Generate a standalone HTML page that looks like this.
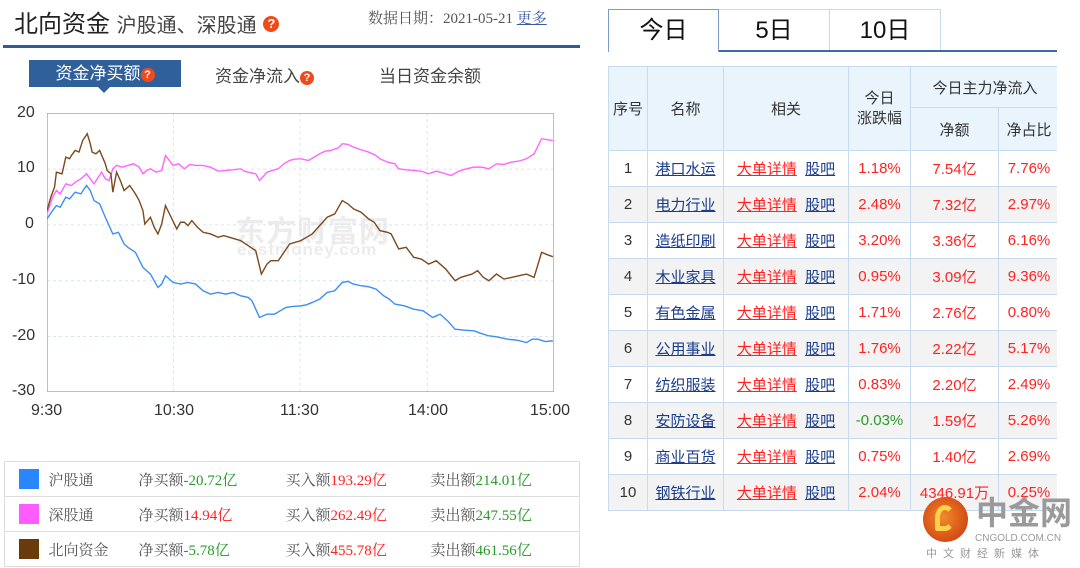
<!DOCTYPE html>
<html><head><meta charset="utf-8">
<style>
*{margin:0;padding:0;box-sizing:border-box}
body{width:1080px;height:568px;background:#fff;position:relative;overflow:hidden;font-family:"Liberation Sans","Noto Sans CJK SC",sans-serif;color:#333}
.abs{position:absolute}
.q{display:inline-block;width:16px;height:16px;border-radius:50%;background:#f04a1a;color:#fff;font-size:13px;line-height:16px;text-align:center;font-weight:bold;vertical-align:middle}
.serif{font-family:"Liberation Serif","Noto Serif CJK SC",serif}
table{border-collapse:collapse}
#t td{border:1px solid #c6dbef;text-align:center;font-size:15px;height:36px;padding:0}
#t tr.h td{background:#e9f4fd;color:#333}
#t tr.g td{background:#f3f3f3}
.lk{color:#1a3c8c;text-decoration:underline}
.rd{color:#f22}
.gn{color:#2a9a2a}
#lg td{border-top:1px solid #ddd;height:35px;font-size:15px;color:#555}
</style></head><body>
<div class="abs" style="left:14px;top:4px;font-size:24px;color:#222">北向资金 <span style="font-size:20px;color:#444">沪股通、深股通</span> <span class="q" style="margin-top:-3px">?</span></div>
<div class="abs serif" style="left:368px;top:7px;font-size:15px;color:#555">数据日期：2021-05-21 <span style="color:#3a5aa8;text-decoration:underline">更多</span></div>
<div class="abs" style="left:3px;top:45px;width:577px;height:3px;background:#2f5a97"></div>
<div class="abs" style="left:29px;top:60px;width:152px;height:27px;background:#2f6099;color:#fff;font-size:17px;line-height:27px;text-align:center">资金净买额<span class="q" style="width:14px;height:14px;font-size:11px;line-height:14px">?</span></div>
<div class="abs" style="left:98px;top:87px;width:0;height:0;border-left:6px solid transparent;border-right:6px solid transparent;border-top:6px solid #2f6099"></div>
<div class="abs" style="left:215px;top:62px;font-size:17px;color:#444">资金净流入<span class="q" style="width:14px;height:14px;font-size:11px;line-height:14px">?</span></div>
<div class="abs" style="left:379px;top:62px;font-size:17px;color:#444">当日资金余额</div>
<div class="abs" style="left:17px;top:103px;font-size:16px;line-height:20px">20</div>
<div class="abs" style="left:17px;top:158px;font-size:16px;line-height:20px">10</div>
<div class="abs" style="left:25px;top:214px;font-size:16px;line-height:20px">0</div>
<div class="abs" style="left:12px;top:270px;font-size:16px;line-height:20px">-10</div>
<div class="abs" style="left:12px;top:326px;font-size:16px;line-height:20px">-20</div>
<div class="abs" style="left:12px;top:381px;font-size:16px;line-height:20px">-30</div>
<div class="abs" style="left:31px;top:401px;font-size:16px;line-height:20px">9:30</div>
<div class="abs" style="left:154px;top:401px;font-size:16px;line-height:20px">10:30</div>
<div class="abs" style="left:280px;top:401px;font-size:16px;line-height:20px">11:30</div>
<div class="abs" style="left:408px;top:401px;font-size:16px;line-height:20px">14:00</div>
<div class="abs" style="left:530px;top:401px;font-size:16px;line-height:20px">15:00</div>
<div class="abs" style="left:235px;top:207px;font-size:30px;font-weight:bold;color:#ececec;letter-spacing:1px">东方财富网</div>
<div class="abs" style="left:237px;top:240px;font-size:17px;font-weight:bold;color:#ececec;letter-spacing:1px">eastmoney.com</div>
<svg class="abs" style="left:47px;top:113px" width="507" height="279" viewBox="125 58 1348 835" preserveAspectRatio="none">
<path d="M125 226H1473M125 393H1473M125 560H1473M125 727H1473M461 58V893M798 58V893M1136 58V893" fill="none" stroke="#d6e6f5" stroke-dasharray="3,3" vector-effect="non-scaling-stroke"/>
<rect x="125" y="58" width="1348" height="835" fill="none" stroke="#aaa" stroke-width="1.5" vector-effect="non-scaling-stroke"/>
<polyline fill="none" stroke="#3d8ef5" stroke-width="1.4" vector-effect="non-scaling-stroke" points="125,375 140,350 150,335 160,340 175,310 185,315 200,295 215,300 230,275 240,290 250,320 265,330 280,370 290,395 300,420 315,415 330,450 340,460 360,475 380,520 400,540 420,580 430,570 440,545 460,565 480,570 500,565 520,570 540,590 560,600 580,595 600,600 620,595 640,605 660,610 670,620 690,670 710,660 730,660 745,650 760,640 780,637 800,635 815,632 830,625 850,615 870,595 890,590 910,565 925,562 940,570 960,575 980,578 1000,585 1020,605 1035,615 1050,630 1075,635 1100,645 1125,650 1150,670 1160,665 1170,660 1190,680 1210,705 1235,708 1260,710 1280,718 1300,725 1320,728 1350,735 1375,738 1400,745 1415,735 1430,735 1450,742 1470,740"/>
<polyline fill="none" stroke="#ff66ff" stroke-width="1.4" vector-effect="non-scaling-stroke" points="125,360 140,310 150,290 160,300 175,270 190,275 200,265 215,255 230,240 240,255 250,270 270,235 280,255 290,260 300,225 310,215 325,220 340,215 355,210 370,220 380,240 390,230 400,225 415,235 430,230 440,185 450,200 460,215 475,210 490,225 505,212 520,215 540,215 560,220 580,232 600,230 620,228 640,225 650,232 660,235 680,240 690,260 700,248 710,235 725,230 740,225 755,210 770,200 785,196 800,195 820,200 835,190 850,180 865,172 880,170 900,162 910,150 925,152 940,160 960,168 980,175 1000,185 1010,195 1030,205 1050,210 1060,225 1080,228 1100,230 1120,232 1140,240 1160,232 1170,235 1190,242 1200,245 1220,232 1240,225 1260,220 1280,220 1300,225 1320,210 1340,212 1360,205 1380,202 1400,195 1420,180 1440,135 1455,138 1470,140"/>
<polyline fill="none" stroke="#7a4a1e" stroke-width="1.4" vector-effect="non-scaling-stroke" points="125,350 135,310 145,280 150,235 165,240 175,190 185,195 190,185 200,170 210,175 220,140 232,120 240,150 245,175 255,180 265,170 280,210 285,230 295,240 300,295 310,235 320,260 330,290 345,275 360,300 370,320 380,350 385,390 400,370 410,400 420,420 430,390 440,335 455,370 470,405 480,385 490,385 500,395 510,380 525,400 540,415 560,420 580,430 595,425 610,430 625,435 640,440 660,455 680,470 695,540 710,510 720,500 740,500 755,475 770,450 785,445 800,440 815,430 830,420 850,395 870,370 890,360 910,320 925,330 940,345 960,355 980,375 995,385 1010,410 1030,415 1040,420 1060,465 1080,460 1100,490 1120,495 1140,510 1160,500 1185,525 1210,560 1225,550 1240,545 1255,540 1270,530 1285,550 1300,560 1320,540 1340,555 1360,550 1380,545 1400,540 1410,545 1420,550 1440,475 1455,482 1470,488"/>
</svg>
<table id="lg" class="abs serif" style="left:4px;top:461px;width:576px;border:1px solid #ddd">
<tr><td style="width:44px;padding-left:14px"><div style="width:20px;height:20px;background:#2a86ff"></div></td><td style="width:90px">沪股通</td><td style="width:147px">净买额<span class="gn">-20.72亿</span></td><td style="width:145px">买入额<span class="rd">193.29亿</span></td><td>卖出额<span class="gn">214.01亿</span></td></tr>
<tr><td style="padding-left:14px"><div style="width:20px;height:20px;background:#ff5cff"></div></td><td>深股通</td><td>净买额<span class="rd">14.94亿</span></td><td>买入额<span class="rd">262.49亿</span></td><td>卖出额<span class="gn">247.55亿</span></td></tr>
<tr><td style="padding-left:14px"><div style="width:20px;height:20px;background:#6b3a0a"></div></td><td>北向资金</td><td>净买额<span class="gn">-5.78亿</span></td><td>买入额<span class="rd">455.78亿</span></td><td>卖出额<span class="gn">461.56亿</span></td></tr>
</table>
<div class="abs" style="left:608px;top:9px;width:111px;height:43px;border:1px solid #7d9cc5;border-bottom:none;background:#fff;font-size:24px;text-align:center;line-height:42px;color:#111">今日</div>
<div class="abs" style="left:719px;top:9px;width:111px;height:42px;border:1px solid #c6dbef;border-left:none;font-size:24px;text-align:center;line-height:42px;color:#111">5日</div>
<div class="abs" style="left:830px;top:9px;width:111px;height:42px;border:1px solid #c6dbef;border-left:none;font-size:24px;text-align:center;line-height:42px;color:#111">10日</div>
<div class="abs" style="left:719px;top:50px;width:338px;height:2px;background:#3f6aa8"></div>
<table id="t" class="abs" style="left:608px;top:66px;width:452px">
<tr class="h"><td rowspan="2" style="width:39px;height:84px">序号</td><td rowspan="2" style="width:76px">名称</td><td rowspan="2" style="width:125px">相关</td><td rowspan="2" style="width:62px;line-height:20px">今日<br>涨跌幅</td><td colspan="2" style="height:41px">今日主力净流入</td></tr>
<tr class="h"><td style="width:88px;height:43px">净额</td><td>净占比</td></tr>
<tr><td>1</td><td><span class="lk">港口水运</span></td><td><span class="rd" style="text-decoration:underline">大单详情</span>&nbsp; <span class="lk">股吧</span></td><td class="rd">1.18%</td><td class="rd">7.54亿</td><td class="rd">7.76%</td></tr>
<tr class="g"><td>2</td><td><span class="lk">电力行业</span></td><td><span class="rd" style="text-decoration:underline">大单详情</span>&nbsp; <span class="lk">股吧</span></td><td class="rd">2.48%</td><td class="rd">7.32亿</td><td class="rd">2.97%</td></tr>
<tr><td>3</td><td><span class="lk">造纸印刷</span></td><td><span class="rd" style="text-decoration:underline">大单详情</span>&nbsp; <span class="lk">股吧</span></td><td class="rd">3.20%</td><td class="rd">3.36亿</td><td class="rd">6.16%</td></tr>
<tr class="g"><td>4</td><td><span class="lk">木业家具</span></td><td><span class="rd" style="text-decoration:underline">大单详情</span>&nbsp; <span class="lk">股吧</span></td><td class="rd">0.95%</td><td class="rd">3.09亿</td><td class="rd">9.36%</td></tr>
<tr><td>5</td><td><span class="lk">有色金属</span></td><td><span class="rd" style="text-decoration:underline">大单详情</span>&nbsp; <span class="lk">股吧</span></td><td class="rd">1.71%</td><td class="rd">2.76亿</td><td class="rd">0.80%</td></tr>
<tr class="g"><td>6</td><td><span class="lk">公用事业</span></td><td><span class="rd" style="text-decoration:underline">大单详情</span>&nbsp; <span class="lk">股吧</span></td><td class="rd">1.76%</td><td class="rd">2.22亿</td><td class="rd">5.17%</td></tr>
<tr><td>7</td><td><span class="lk">纺织服装</span></td><td><span class="rd" style="text-decoration:underline">大单详情</span>&nbsp; <span class="lk">股吧</span></td><td class="rd">0.83%</td><td class="rd">2.20亿</td><td class="rd">2.49%</td></tr>
<tr class="g"><td>8</td><td><span class="lk">安防设备</span></td><td><span class="rd" style="text-decoration:underline">大单详情</span>&nbsp; <span class="lk">股吧</span></td><td class="gn">-0.03%</td><td class="rd">1.59亿</td><td class="rd">5.26%</td></tr>
<tr><td>9</td><td><span class="lk">商业百货</span></td><td><span class="rd" style="text-decoration:underline">大单详情</span>&nbsp; <span class="lk">股吧</span></td><td class="rd">0.75%</td><td class="rd">1.40亿</td><td class="rd">2.69%</td></tr>
<tr class="g"><td>10</td><td><span class="lk">钢铁行业</span></td><td><span class="rd" style="text-decoration:underline">大单详情</span>&nbsp; <span class="lk">股吧</span></td><td class="rd">2.04%</td><td class="rd">4346.91万</td><td class="rd">0.25%</td></tr>
</table>
<div class="abs" style="left:1057px;top:60px;width:23px;height:460px;background:#fff"></div>
<div class="abs" style="left:923px;top:497px;width:45px;height:45px;border-radius:50%;background:radial-gradient(circle at 45% 45%,#f08a2a,#c8300c)"></div>
<div class="abs" style="left:935px;top:505px;width:20px;height:26px;border:5px solid #ffd24a;border-radius:50% 50% 50% 10%;border-right-color:transparent"></div>
<div class="abs" style="left:976px;top:496px;font-size:32px;font-weight:bold;color:#9a9a9a;line-height:34px">中金网</div>
<div class="abs" style="left:975px;top:533px;font-size:10px;color:#999">CNGOLD.COM.CN</div>
<div class="abs" style="left:926px;top:545px;font-size:11px;color:#999;letter-spacing:6px">中文财经新媒体</div>
</body></html>
